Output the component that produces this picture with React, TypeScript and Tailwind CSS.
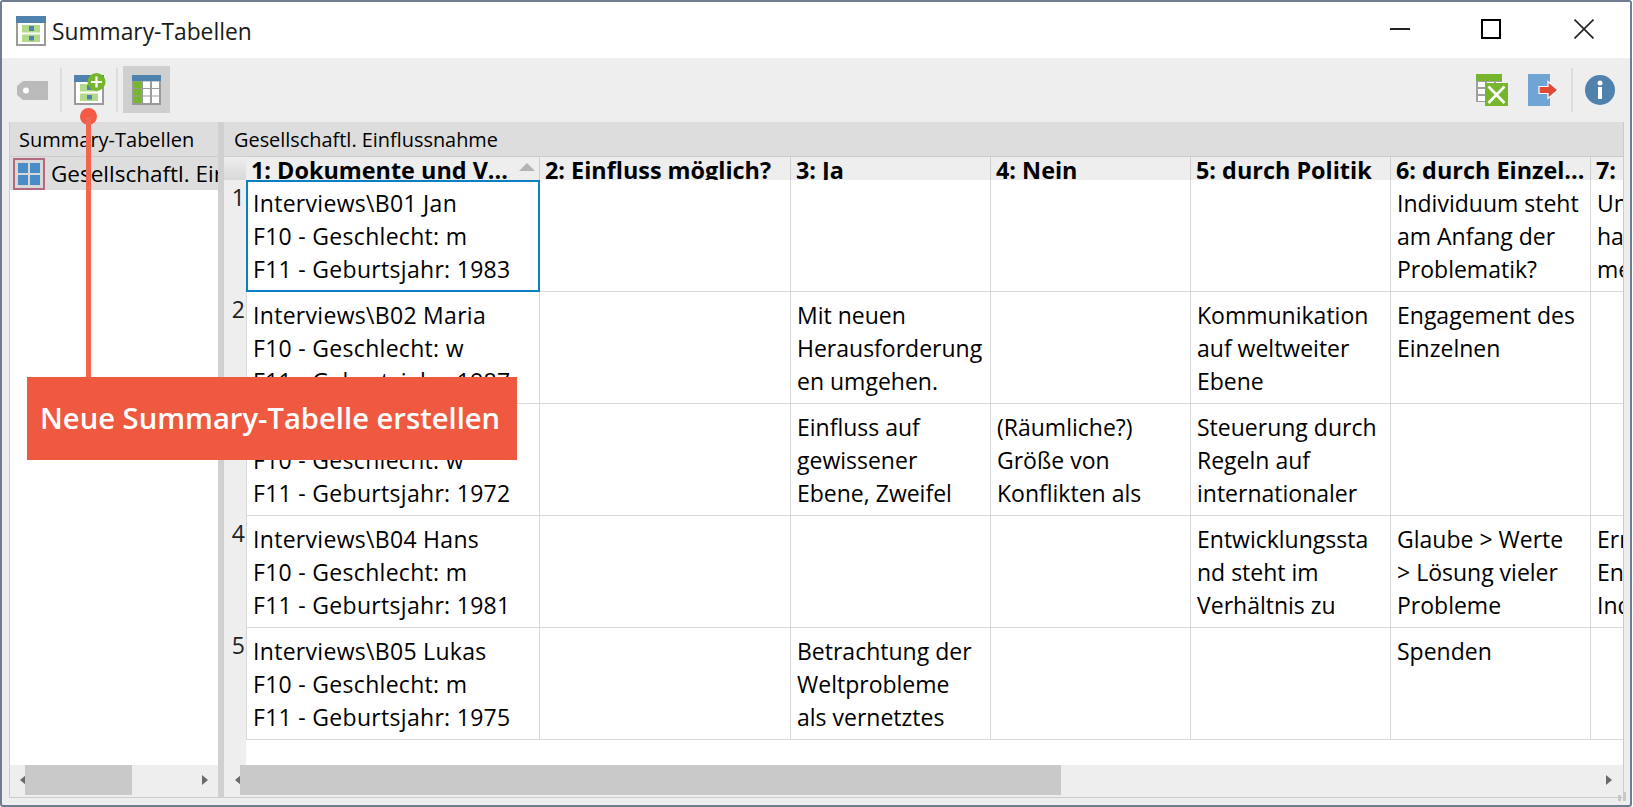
const FONT = "font-['Open_Sans','Noto_Sans',sans-serif]";

type Cell = string[];

const COLS = [
  { w: "w-[294px]", label: "1: Dokumente und V..." },
  { w: "w-[251px]", label: "2: Einfluss möglich?" },
  { w: "w-[200px]", label: "3: Ja" },
  { w: "w-[200px]", label: "4: Nein" },
  { w: "w-[200px]", label: "5: durch Politik" },
  { w: "w-[200px]", label: "6: durch Einzel..." },
  { w: "w-[34px]", label: "7:" },
];

const ROWS: Cell[][] = [
  [
    ["Interviews\\B01 Jan", "F10 - Geschlecht: m", "F11 - Geburtsjahr: 1983"],
    [],
    [],
    [],
    [],
    ["Individuum steht", "am Anfang der", "Problematik?"],
    ["Un", "ha", "me"],
  ],
  [
    ["Interviews\\B02 Maria", "F10 - Geschlecht: w", "F11 - Geburtsjahr: 1987"],
    [],
    ["Mit neuen", "Herausforderung", "en umgehen."],
    [],
    ["Kommunikation", "auf weltweiter", "Ebene"],
    ["Engagement des", "Einzelnen"],
    [],
  ],
  [
    ["Interviews\\B03 Sarah", "F10 - Geschlecht: w", "F11 - Geburtsjahr: 1972"],
    [],
    ["Einfluss auf", "gewissener", "Ebene, Zweifel"],
    ["(Räumliche?)", "Größe von", "Konflikten als"],
    ["Steuerung durch", "Regeln auf", "internationaler"],
    [],
    [],
  ],
  [
    ["Interviews\\B04 Hans", "F10 - Geschlecht: m", "F11 - Geburtsjahr: 1981"],
    [],
    [],
    [],
    ["Entwicklungssta", "nd steht im", "Verhältnis zu"],
    ["Glaube > Werte", "> Lösung vieler", "Probleme"],
    ["Ern", "Ent", "Ind"],
  ],
  [
    ["Interviews\\B05 Lukas", "F10 - Geschlecht: m", "F11 - Geburtsjahr: 1975"],
    [],
    ["Betrachtung der", "Weltprobleme", "als vernetztes"],
    [],
    [],
    ["Spenden"],
    [],
  ],
];

function TableIcon() {
  return (
    <svg width="30" height="30" viewBox="0 0 30 30" className="block">
      <rect width="30" height="30" fill="#9a9a9a" />
      <rect width="30" height="7" fill="#4f83ad" />
      <rect x="2" y="7" width="26" height="21" fill="#fff" />
      <rect x="6" y="9" width="18" height="7.5" fill="#b3d98a" />
      <rect x="6" y="18.5" width="18" height="7.5" fill="#b3d98a" />
      <rect x="13" y="10" width="5" height="5" fill="#4f83ad" />
      <rect x="13" y="20" width="5" height="4.5" fill="#4f83ad" />
    </svg>
  );
}

function NewTableIcon() {
  return (
    <svg width="32" height="32" viewBox="0 0 32 32" className="block">
      <rect y="2" width="30" height="30" fill="#9a9a9a" />
      <rect y="2" width="30" height="7" fill="#4f83ad" />
      <rect x="2" y="9" width="26" height="21" fill="#fff" />
      <rect x="6" y="11" width="18" height="7.5" fill="#b3d98a" />
      <rect x="6" y="20.5" width="18" height="7.5" fill="#b3d98a" />
      <rect x="13" y="12" width="5" height="5" fill="#4f83ad" />
      <rect x="13" y="22" width="5" height="4.5" fill="#4f83ad" />
      <circle cx="22.5" cy="9" r="9" fill="#76b52c" />
      <path d="M22.5 3.5v11M17 9h11" stroke="#fff" strokeWidth="2.2" />
    </svg>
  );
}

function GridIcon() {
  return (
    <svg width="29" height="30" viewBox="0 0 29 30" className="block">
      <rect width="29" height="30" fill="#9a9a9a" />
      <rect width="29" height="6" fill="#4f83ad" />
      {[6.5, 14, 21.5].map((y) => (
        <g key={y}>
          <rect x="2" y={y} width="7" height="6.5" fill="#76b52c" />
          <rect x="11" y={y} width="7" height="6.5" fill="#fff" />
          <rect x="20" y={y} width="7" height="6.5" fill="#fff" />
        </g>
      ))}
    </svg>
  );
}

function TagIcon() {
  return (
    <svg width="31" height="20" viewBox="0 0 31 20" className="block">
      <path d="M6 0H31V19H6L0 14V5Z" fill="#bababa" />
      <circle cx="9" cy="9.5" r="3" fill="#fff" />
    </svg>
  );
}

function ExcelIcon() {
  return (
    <svg width="32" height="32" viewBox="0 0 32 32" className="block">
      <rect width="26" height="7" fill="#76b52c" />
      <rect y="7" width="26" height="21" fill="#a0a0a0" />
      <rect x="2" y="8" width="7" height="5" fill="#fff" />
      <rect x="2" y="15" width="7" height="5" fill="#fff" />
      <rect x="2" y="22" width="7" height="5" fill="#fff" />
      <rect x="11" y="8" width="7" height="5" fill="#fff" />
      <rect x="20" y="8" width="6" height="5" fill="#fff" />
      <rect x="9" y="9" width="23" height="23" fill="#76b52c" />
      <path d="M12.5 12.5L28.5 29M28.5 12.5L12.5 29" stroke="#fff" strokeWidth="2.6" />
    </svg>
  );
}

function ExportIcon() {
  return (
    <svg width="30" height="32" viewBox="0 0 30 32" className="block overflow-visible">
      <rect width="22" height="32" fill="#6fa5d4" />
      <path d="M11 12.5h9V7.5l10 8.500-10 8.500v-5H11Z" fill="#e14a33" stroke="#fff" strokeWidth="1.200" />
    </svg>
  );
}

function InfoIcon() {
  return (
    <svg width="30" height="30" viewBox="0 0 30 30" className="block">
      <circle cx="15" cy="15" r="15" fill="#5082ad" />
      <circle cx="15" cy="8" r="2.500" fill="#fff" />
      <rect x="13" y="12" width="4" height="12" fill="#fff" />
    </svg>
  );
}

function FourIcon() {
  return (
    <div className="w-[32px] h-[32px] shrink-0 border-2 border-[#b5697f] bg-[#d8d8d8] grid grid-cols-2 gap-[2px] p-[3px]">
      <div className="bg-[#4a8cc7]" />
      <div className="bg-[#4a8cc7]" />
      <div className="bg-[#4a8cc7]" />
      <div className="bg-[#4a8cc7]" />
    </div>
  );
}

function Arrow({ dir }: { dir: "left" | "right" }) {
  return (
    <svg width="6" height="10" viewBox="0 0 6 10" className="block shrink-0">
      <path d={dir === "left" ? "M6 0V10L0 5Z" : "M0 0V10L6 5Z"} fill="#6a6a6a" />
    </svg>
  );
}

function ScrollBar({ thumb, pad }: { thumb: string; pad: string }) {
  return (
    <div className={`h-[30px] bg-[#eeeeee] flex items-center shrink-0 ${pad}`}>
      <Arrow dir="left" />
      <div className={`h-[30px] bg-[#c9c9c9] -ml-[1px] ${thumb}`} />
      <div className="flex-1" />
      <Arrow dir="right" />
    </div>
  );
}

function Separator() {
  return <div className="w-[2px] h-[44px] bg-[#dddddd]" />;
}

export default function App() {
  return (
    <div className={`w-[1633px] h-[807px] overflow-hidden bg-white relative ${FONT}`}>
      <div className="w-[1632px] h-[807px] border-2 border-[#6f7d92] rounded-[3px] bg-[#eeeeee] flex flex-col text-black">
        {/* title bar */}
        <div className="h-[56px] flex items-center bg-white shrink-0">
          <div className="ml-[14px] mt-[2px]">
            <TableIcon />
          </div>
          <span className="ml-[6px] mt-[4px] text-[22.800px] leading-none text-[#1a1a1a]">Summary-Tabellen</span>
          <div className="ml-auto flex items-center mt-[-3px] mr-[36px]">
            <div className="w-[20px] h-[2px] bg-[#222222]" />
            <div className="ml-[71px] w-[20px] h-[20px] border-2 border-black" />
            <svg width="20" height="20" viewBox="0 0 20 20" className="block ml-[73px]">
              <path d="M0.500 0.500L19.500 19.500M19.500 0.500L0.500 19.500" stroke="#222222" strokeWidth="1.600" />
            </svg>
          </div>
        </div>

        {/* toolbar */}
        <div className="h-[64px] bg-[#eeeeee] flex items-center shrink-0">
          <div className="ml-[15px] mt-[1px]">
            <TagIcon />
          </div>
          <div className="ml-[12px]">
            <Separator />
          </div>
          <div className="ml-[12px] mb-[-2px] mt-[-4px]">
            <NewTableIcon />
          </div>
          <div className="ml-[10px]">
            <Separator />
          </div>
          <div className="ml-[5px] w-[47px] h-[47px] bg-[#cfcfcf] flex items-center justify-center mt-[-1px]">
            <GridIcon />
          </div>
          <div className="ml-auto flex items-center">
            <ExcelIcon />
            <div className="ml-[20px]">
              <ExportIcon />
            </div>
            <div className="ml-[13px]">
              <Separator />
            </div>
            <div className="ml-[12px] mr-[15px]">
              <InfoIcon />
            </div>
          </div>
        </div>

        {/* panels */}
        <div className="h-[676px] flex pl-[7px] pr-[6px] bg-[#eeeeee] shrink-0">
          {/* left panel */}
          <div className="w-[209px] flex flex-col border-l border-b border-[#cccccc]">
            <div className="h-[35px] bg-[#dddddd] border-b border-[#cccccc] flex items-center pl-[9px] pt-[2px] text-[20px] shrink-0">
              Summary-Tabellen
            </div>
            <div className="flex-1 bg-white min-h-0">
              <div className="h-[33px] bg-[#dddddd] flex items-center pl-[3px] overflow-hidden">
                <FourIcon />
                <span className="ml-[6px] text-[22.500px] whitespace-nowrap">Gesellschaftl. Einflussnahme</span>
              </div>
            </div>
            <ScrollBar thumb="w-[107px]" pad="pl-[10px] pr-[10px]" />
            <div className="h-[2px] shrink-0" />
          </div>

          {/* splitter */}
          <div className="w-[6px] bg-[#d0d0d0]" />

          {/* right panel */}
          <div className="flex-1 min-w-0 flex flex-col border-b border-r border-[#cccccc]">
            <div className="h-[35px] bg-[#dddddd] border-b border-[#cccccc] flex items-center pl-[10px] pt-[2px] text-[19.900px] shrink-0">
              Gesellschaftl. Einflussnahme
            </div>
            <div className="flex-1 min-h-0 bg-white flex overflow-hidden">
              {/* row numbers */}
              <div className="w-[22px] bg-[#eeeeee] shrink-0 overflow-hidden">
                <div className="h-[23px] bg-gradient-to-b from-[#eeeeee] to-[#d8d8d8]" />
                {ROWS.map((_, i) => (
                  <div key={i} className="h-[112px] pr-[1px] pt-[1px] text-right text-[23px] leading-[33px] text-[#222222]">
                    {i + 1}
                  </div>
                ))}
              </div>
              {/* table */}
              <div className="flex-1 min-w-0">
                <div className="flex h-[23px] bg-[#eeeeee] overflow-hidden">
                  {COLS.map((c, i) => (
                    <div
                      key={c.label}
                      className={`relative ${c.w} shrink-0 border-r border-[#d0d0d0] pl-[5px] text-[23.400px] font-bold leading-[26px] whitespace-nowrap overflow-hidden`}
                    >
                      {c.label}
                      {i === 0 && (
                        <svg width="16" height="8" viewBox="0 0 16 8" className="absolute right-[4px] top-[6px]">
                          <path d="M8 0L16 8H0Z" fill="#b4b4b4" />
                        </svg>
                      )}
                    </div>
                  ))}
                </div>
                {ROWS.map((row, r) => (
                  <div key={r} className="flex h-[112px]">
                    {row.map((lines, c) => (
                      <div
                        key={c}
                        className={`${COLS[c].w} shrink-0 overflow-hidden whitespace-nowrap border-b border-[#d8d8d8] pt-[7px] text-[23px] leading-[33px] ${
                          c === COLS.length - 1 ? "" : "border-r"
                        } ${c === 0 ? "border-l pl-[6px] tracking-[0.3px]" : "pl-[6px]"} ${
                          r === 0 && c === 0 ? "outline outline-2 -outline-offset-2 outline-[#0a80c4]" : ""
                        }`}
                      >
                        {lines.map((l) => (
                          <div key={l}>{l}</div>
                        ))}
                      </div>
                    ))}
                  </div>
                ))}
              </div>
            </div>
            <ScrollBar thumb="w-[821px]" pad="pl-[11px] pr-[11px]" />
            <div className="h-[2px] shrink-0" />
          </div>
        </div>
      </div>

      {/* resize grip */}
      <svg width="8" height="9" viewBox="0 0 8 9" className="absolute left-[1618px] top-[792px]">
        <path d="M5 0h3v3H5ZM0 3h3v3H0ZM5 3h3v3H5ZM0 6h3v3H0ZM5 6h3v3H5Z" fill="#c8c8c8" />
      </svg>

      {/* annotation */}
      <div className="absolute left-[79.500px] top-[108px] w-[17px] h-[17px] rounded-full bg-[#f45a46]" />
      <div className="absolute left-[85.500px] top-[117px] w-[5px] h-[260px] bg-[#f4654f]" />
      <div className="absolute left-[27px] top-[377px] w-[490px] h-[83px] bg-[#ee5940] flex items-center pl-[13px] text-[29.200px] font-semibold text-white whitespace-nowrap">
        Neue Summary-Tabelle erstellen
      </div>
    </div>
  );
}
